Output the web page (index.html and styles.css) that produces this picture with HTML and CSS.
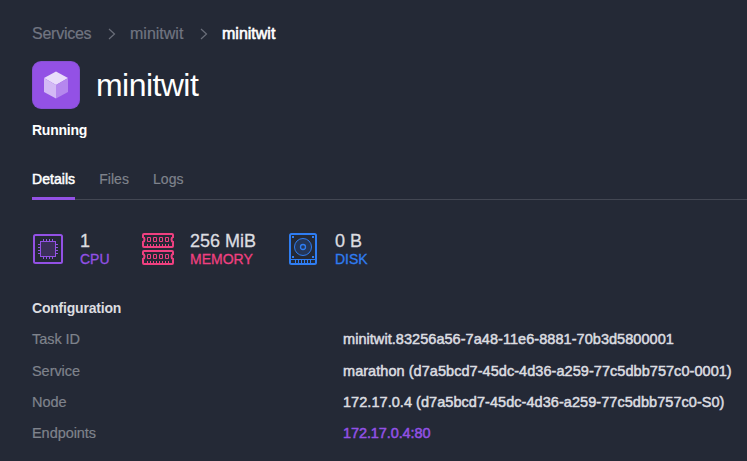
FILE: index.html
```
<!DOCTYPE html>
<html lang="en">
<head>
<meta charset="utf-8">
<title>minitwit</title>
<link rel="stylesheet" href="styles.css">
</head>
<body>
<main class="page">
  <nav class="breadcrumb">
    <a class="crumb root">Services</a>
    <svg class="chevron" width="8" height="12" viewBox="0 0 8 12"><path d="M1 1l5.500 5L1 11"/></svg>
    <a class="crumb">minitwit</a>
    <svg class="chevron" width="8" height="12" viewBox="0 0 8 12"><path d="M1 1l5.500 5L1 11"/></svg>
    <span class="crumb current">minitwit</span>
  </nav>
  <header class="heading">
    <svg width="48" height="48" viewBox="0 0 48 48">
      <rect width="48" height="48" rx="9" fill="#8750d4"/>
      <rect x="1" y="1" width="46" height="46" rx="8" fill="#9351e5"/>
      <path d="M24 10.500l12 6.500-12 7-12-7z" fill="#e9dcfa"/>
      <path d="M12 17l12 7v13.500L12 31z" fill="#d3b9f5"/>
      <path d="M36 17l-12 7v13.500L36 31z" fill="#b587ee"/>
    </svg>
    <h1 class="title">minitwit</h1>
  </header>
  <p class="status">Running</p>
  <nav class="tabs">
    <a class="tab active">Details</a>
    <a class="tab">Files</a>
    <a class="tab">Logs</a>
  </nav>
  <section class="resources">
    <div class="resource cpu">
      <svg width="32" height="34" viewBox="0 0 32 34" fill="none" stroke="currentColor">
        <rect x="2" y="3" width="28" height="28" rx="1.500" stroke-width="2"/>
        <rect x="8.500" y="9.500" width="15" height="15" fill="#3b2f59"/>
        <path d="M11.500 7v2M14.500 7v2M17.500 7v2M20.500 7v2M11.500 25v2M14.500 25v2M17.500 25v2M20.500 25v2M6 12.500h2M6 15.500h2M6 18.500h2M6 21.500h2M24 12.500h2M24 15.500h2M24 18.500h2M24 21.500h2"/>
      </svg>
      <div><div class="amount">1</div><div class="kind">CPU</div></div>
    </div>
    <div class="resource memory">
      <svg width="34" height="34" viewBox="0 0 34 34" fill="none" stroke="currentColor">
        <g id="stick">
          <path d="M3 2h28q1 0 1 1v2q-1.500 .5-1.500 2.500t1.500 2.500v4q0 1-1 1H3q-1 0-1-1v-4q1.500-.5 1.500-2.500T2 5V3q0-1 1-1z" stroke-width="2"/>
          <path d="M6.500 5.500h3v4h-3zM12.500 5.500h3v4h-3zM18.500 5.500h3v4h-3zM24.500 5.500h3v4h-3zM6.500 12v2M9.500 12v2M12.500 12v2M15.500 12v2M18.500 12v2M21.500 12v2M24.500 12v2M27.500 12v2"/>
        </g>
        <use href="#stick" y="17"/>
      </svg>
      <div><div class="amount">256 MiB</div><div class="kind">MEMORY</div></div>
    </div>
    <div class="resource disk">
      <svg width="30" height="34" viewBox="0 0 30 34" fill="none" stroke="currentColor">
        <rect x="2" y="2" width="26" height="30" rx="1.500" stroke-width="2"/>
        <circle cx="15" cy="15" r="8.500" fill="#243658"/>
        <circle cx="15" cy="15" r="2.500" stroke-width="1.300"/>
        <path d="M2 27.500h26M7.500 28v3M10.500 28v3M13.500 28v3M16.500 28v3M19.500 28v3M22.500 28v3"/>
        <path d="M4 5h2M24 5h2M4 25h2M24 25h2" stroke-width="2"/>
      </svg>
      <div><div class="amount">0 B</div><div class="kind">DISK</div></div>
    </div>
  </section>
  <section class="configuration">
    <h2 class="section-title">Configuration</h2>
    <dl class="fields">
      <dt>Task ID</dt><dd>minitwit.83256a56-7a48-11e6-8881-70b3d5800001</dd>
      <dt>Service</dt><dd>marathon (d7a5bcd7-45dc-4d36-a259-77c5dbb757c0-0001)</dd>
      <dt>Node</dt><dd>172.17.0.4 (d7a5bcd7-45dc-4d36-a259-77c5dbb757c0-S0)</dd>
      <dt>Endpoints</dt><dd><a class="endpoint">172.17.0.4:80</a></dd>
    </dl>
  </section>
</main>
</body>
</html>
```
FILE: styles.css
```
* { box-sizing: border-box; }
body {
  margin: 0;
  background: #242936;
  color: #dcdde0;
  font: 14px/20px "Liberation Sans", Arial, sans-serif;
  overflow: hidden;
}
h1, h2, p, dl, dd { margin: 0; }
svg { display: block; flex: none; }
.page { padding: 24px 0 0 32px; height: 461px; }
.breadcrumb { display: flex; align-items: center; height: 20px; font-size: 16px; }
.crumb { color: #717581; width: 54px; white-space: nowrap; -webkit-text-stroke: 0.2px; }
.crumb.root { width: 60px; letter-spacing: -0.25px; }
.crumb.current { color: #fff; -webkit-text-stroke: 0.6px; }
.chevron { margin: 0 14px 0 16px; fill: none; stroke: #6a6e7a; stroke-width: 1.2; }
.heading { display: flex; align-items: center; gap: 16px; margin-top: 17px; height: 48px; }
.title { color: #fff; font-size: 32px; line-height: 48px; font-weight: 400; letter-spacing: -0.55px; }
.status { margin-top: 11px; color: #fff; font-weight: 700; letter-spacing: -0.25px; }
.tabs { display: flex; gap: 24px; margin-top: 29px; height: 31px; border-bottom: 1px solid #434753; }
.tab { height: 31px; color: #7f838c; letter-spacing: 0.05px; -webkit-text-stroke: 0.2px; }
.tab.active { color: #fff; border-bottom: 3px solid #9351e5; -webkit-text-stroke: 0.5px; }
.resources { display: flex; margin-top: 32px; height: 36px; }
.resource { display: flex; gap: 16px; }
.cpu { width: 109px; color: #9351e5; }
.memory { width: 147px; gap: 15px; color: #ef4080; }
.disk { gap: 17px; color: #2f7df2; }
.amount { color: #dcdde0; font-size: 18px; line-height: 18px; -webkit-text-stroke: 0.3px; }
.kind { line-height: 18px; -webkit-text-stroke: 0.3px; }
.section-title { margin-top: 30px; font-size: 14px; line-height: 20px; letter-spacing: -0.2px; }
.fields { display: grid; grid-template-columns: 311px 1fr; grid-template-rows: 32px 31px 31px 20px; margin-top: 11px; font-size: 14.5px; white-space: nowrap; }
.fields dt { color: #7f838c; letter-spacing: -0.05px; -webkit-text-stroke: 0.2px; }
.fields dd { letter-spacing: 0.05px; -webkit-text-stroke: 0.5px; }
.endpoint { color: #9351e5; letter-spacing: -0.1px; }
```
